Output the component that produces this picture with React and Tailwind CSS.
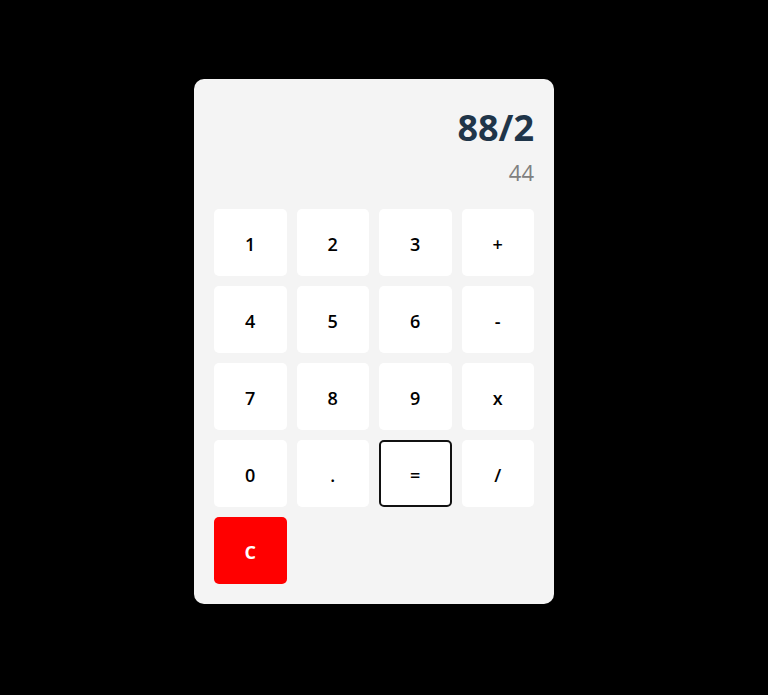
import React from "react";

const keys = ["1","2","3","+","4","5","6","-","7","8","9","x","0",".","=","/"];

export default function App() {
  return (
    <div className="w-[768px] h-[695px] bg-black flex items-start justify-center pt-[79px] pr-5" style={{fontFamily: '"Open Sans", "Noto Sans", sans-serif'}}>
      <div className="w-[360px] h-[525px] bg-[#f4f4f4] rounded-[10px] p-5 flex flex-col">
        <div className="flex flex-col items-end h-[100px]">
          <div className="text-[36px] font-bold leading-[1] mt-[11px] text-[#1f3549]">88/2</div>
          <div className="text-[22px] leading-[1] mt-[15px] text-[#808080]">44</div>
        </div>
        <div className="grid grid-cols-4 gap-[10px] mt-[10px]">
          {keys.map((k) => (
            <button
              key={k}
              className={
                "h-[67px] rounded-[5px] bg-white text-[18px] font-semibold text-black flex items-center justify-center pt-[3px] " +
                (k === "=" ? "border-2 border-[#111]" : "")
              }
            >
              {k}
            </button>
          ))}
          <button className="h-[67px] rounded-[5px] bg-[#ff0000] text-[18px] font-bold text-white flex items-center justify-center pt-[3px]">C</button>
        </div>
      </div>
    </div>
  );
}
